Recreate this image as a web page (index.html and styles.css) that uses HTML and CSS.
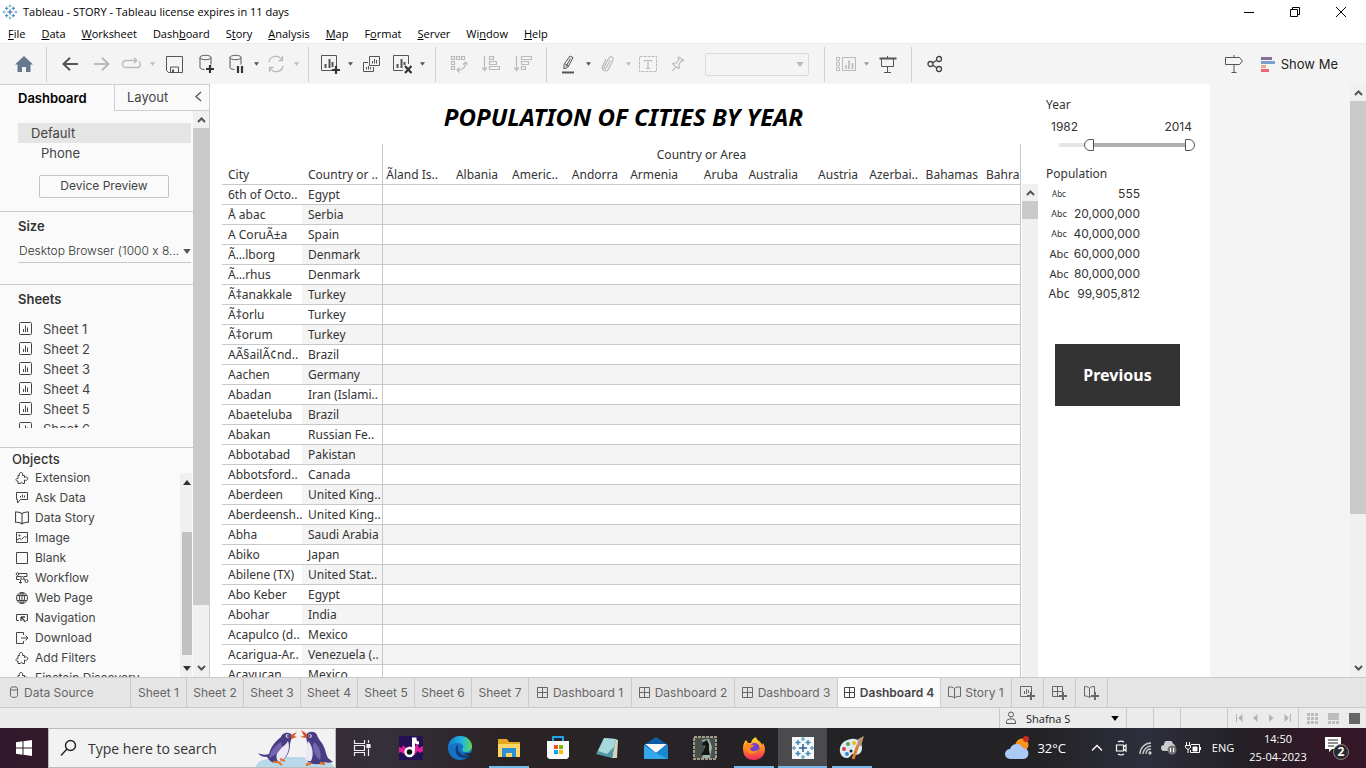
FILE: index.html
```html
<!DOCTYPE html>
<html lang="en">
<head>
<meta charset="utf-8">
<title>Tableau - STORY</title>
<link rel="stylesheet" href="styles.css">
</head>
<body>
<svg class="defs" aria-hidden="true">
  <symbol id="i-sheet" viewBox="0 0 14 14"><rect x=".5" y=".5" width="12" height="12" rx="1" fill="none" stroke="currentColor"/><path d="M4.500 7v3M6.500 3.500V10M8.500 5.500V10" fill="none" stroke="currentColor"/></symbol>
  <symbol id="i-dash" viewBox="0 0 12 12"><path d="M.5 .5h10v10H.5zM5.500 .5v10M.5 5.500h10" fill="none" stroke="currentColor"/></symbol>
  <symbol id="i-story" viewBox="0 0 13 13"><path d="M6.500 2.500C5 1 3 .8.500 1v9.500c2.500-.2 4.500 0 6 1.500 1.500-1.500 3.500-1.700 6-1.500V1C10 .8 8 1 6.500 2.500zM6.500 2.500V12" fill="none" stroke="currentColor"/></symbol>
  <symbol id="i-puzzle" viewBox="0 0 14 14"><path d="M3 4.500h1.500c-.7-2 .3-3 1.500-3s2.200 1 1.500 3H9.500v2c1.500-1 3.300-.5 3.300 1S11 10 9.500 9v3.500H7.500c0-1.500-2-1.500-2 0H3V10C1.700 10.300 1 9.500 1 8.700S1.700 7.300 3 7.500z" fill="none" stroke="currentColor"/></symbol>
  <symbol id="i-caret" viewBox="0 0 6 4"><path d="M0 0h6L3 4z" fill="currentColor"/></symbol>
  <symbol id="i-up" viewBox="0 0 9 6"><path d="M1 5l3.500-3.500L8 5" fill="none" stroke="currentColor" stroke-width="2"/></symbol>
  <symbol id="i-down" viewBox="0 0 9 6"><path d="M1 1l3.500 3.500L8 1" fill="none" stroke="currentColor" stroke-width="2"/></symbol>
  <symbol id="i-tableau" viewBox="0 0 24 24"><g fill="none" stroke="#3f87b5" stroke-width="1.500"><path d="M12 8v8M8 12h8" stroke="#2c5f9e"/><path d="M7 4v5M4.500 6.500h5M17 4v5M14.500 6.500h5M7 15v5M4.500 17.500h5M17 15v5M14.500 17.500h5"/><path d="M12 1v4M10 3h4M12 19v4M10 21h4M3 10v4M1 12h4M21 10v4M19 12h4" stroke="#6ba6c8"/></g></symbol>
  <symbol id="i-db" viewBox="0 0 20 20"><path d="M4 3.500v10c0 1 1.500 1.800 4.500 2M15 3.500v7" fill="none" stroke="currentColor"/><ellipse cx="9.500" cy="3.500" rx="5.500" ry="2.200" fill="none" stroke="currentColor"/></symbol>
</svg>

<header class="titlebar">
  <svg class="app-icon" width="16" height="16"><use href="#i-tableau"/></svg>
  <h1>Tableau - STORY - Tableau license expires in 11 days</h1>
  <div class="window-controls">
    <button aria-label="Minimize"><svg width="12" height="12"><path d="M1 6.500h10" stroke="#000"/></svg></button>
    <button aria-label="Restore"><svg width="12" height="12" fill="none" stroke="#000"><path d="M1.500 3.500h7v7h-7zM3.500 3V1.500h7v7H9"/></svg></button>
    <button aria-label="Close"><svg width="12" height="12" stroke="#000"><path d="M1 1l10 10M11 1L1 11"/></svg></button>
  </div>
</header>

<nav class="menubar">
  <button><u>F</u>ile</button><button><u>D</u>ata</button><button><u>W</u>orksheet</button><button>Dash<u>b</u>oard</button><button>S<u>t</u>ory</button><button><u>A</u>nalysis</button><button><u>M</u>ap</button><button>F<u>o</u>rmat</button><button><u>S</u>erver</button><button>Wi<u>n</u>dow</button><button><u>H</u>elp</button>
</nav>

<div class="toolbar">
  <button class="tool" aria-label="Start page"><svg width="18" height="16"><path d="M9 0L0 8.500h2.500V16H7v-5h4v5h4.500V8.500H18z" fill="#66788e"/></svg></button>
  <span class="sep"></span>
  <button class="tool" aria-label="Undo"><svg width="16" height="14" fill="none" stroke="#555" stroke-width="2"><path d="M16 7H1.500M8 .8L1.500 7 8 13.200"/></svg></button>
  <button class="tool off" aria-label="Redo"><svg width="16" height="14" fill="none" stroke="currentColor" stroke-width="2"><path d="M0 7h14.500M8 .8L14.500 7 8 13.200"/></svg></button>
  <button class="tool narrow off" aria-label="Replay"><svg width="20" height="14" fill="none" stroke="currentColor" stroke-width="1.300"><path d="M8 3.500H4a3.500 3.500 0 000 7h11.500c3 0 3.500-4 1.500-6M8 3.500h6M12 .8l2.700 2.700L12 6.200"/></svg></button>
  <button class="caret off" aria-label="Replay options"><svg width="5" height="4"><use href="#i-caret"/></svg></button>
  <button class="tool" aria-label="Save"><svg width="17" height="17" fill="none" stroke="#555"><path d="M.5 .5h16v16H2.500l-2-2zM4.500 16v-5h8v5"/><path d="M7 13.500v3" stroke-width="2"/></svg></button>
  <button class="tool" aria-label="New data source"><svg width="20" height="20"><use href="#i-db"/><path d="M14 11v8M10 15h8" stroke="#333" stroke-width="2.200"/></svg></button>
  <button class="tool narrow" aria-label="Pause updates"><svg width="20" height="20"><use href="#i-db"/><path d="M12 12v7M16 12v7" stroke="#333" stroke-width="2.200"/></svg></button>
  <button class="caret" aria-label="Pause options"><svg width="5" height="4"><use href="#i-caret"/></svg></button>
  <button class="tool narrow off" aria-label="Refresh"><svg width="18" height="18" fill="none" stroke="currentColor" stroke-width="1.300"><path d="M2 7A7 7 0 0115 5M16 11A7 7 0 013 13M15.500 1v4.500h-4M2.500 17v-4.500h4"/></svg></button>
  <button class="caret off" aria-label="Refresh options"><svg width="5" height="4"><use href="#i-caret"/></svg></button>
  <span class="sep"></span>
  <button class="tool narrow" aria-label="New worksheet"><svg width="20" height="20" fill="none" stroke="#555"><path d="M12 16.500H1.500v-15h15V12"/><path d="M5.500 10v4M9.500 5v9M12.500 8v5" stroke-width="2"/><path d="M16 12v8M12 16h8" stroke="#333" stroke-width="2.200"/></svg></button>
  <button class="caret" aria-label="New worksheet options"><svg width="5" height="4"><use href="#i-caret"/></svg></button>
  <button class="tool" aria-label="Duplicate"><svg width="18" height="18" fill="none" stroke="#555"><path d="M6.500 1.500h10v9h-10zM5 7.500H.5v9h10V12M9.500 6v2.500M11.500 4v4.500M13.500 5v3.500M3.500 12v2.500M5.500 11v3.500M7.500 12v2.500"/></svg></button>
  <button class="tool narrow" aria-label="Clear sheet"><svg width="20" height="20" fill="none" stroke="#555"><path d="M11 16.500H1.500v-15h15V10"/><path d="M5.500 10v4M9.500 5v9M12.500 8v3" stroke-width="2"/><path d="M13 12l6.500 7M19.500 12L13 19" stroke="#333" stroke-width="2.200"/></svg></button>
  <button class="caret" aria-label="Clear options"><svg width="5" height="4"><use href="#i-caret"/></svg></button>
  <span class="sep wide-sep"></span>
  <button class="tool off" aria-label="Swap"><svg width="18" height="18" fill="none" stroke="currentColor" stroke-width="1.200"><path d="M1.500 1.500h3v3h-3zM6.500 1.500h3v3h-3zM11.500 1.500h3v3h-3zM1.500 6.500h3v3h-3zM1.500 11.500h3v3h-3zM15.500 7.500c0 5-2 7.500-8 7.500M13 9.500l2.500-2.500L18 9.500M9.500 12.500L7 15l2.500 2.500"/></svg></button>
  <button class="tool off" aria-label="Sort ascending"><svg width="18" height="18" fill="none" stroke="currentColor" stroke-width="1.200"><path d="M2.500 1v14M0 12.500l2.500 3 2.500-3M7.500 1.500h4v3h-4zM7.500 6.500h7v3h-7zM7.500 11.500h10v3h-10z"/></svg></button>
  <button class="tool off" aria-label="Sort descending"><svg width="18" height="18" fill="none" stroke="currentColor" stroke-width="1.200"><path d="M2.500 1v14M0 12.500l2.500 3 2.500-3M7.500 1.500h10v3h-10zM7.500 6.500h7v3h-7zM7.500 11.500h4v3h-4z"/></svg></button>
  <span class="sep wide-sep"></span>
  <button class="tool narrow" aria-label="Highlight"><svg width="14" height="20" fill="none" stroke="#555"><path d="M9 2l3 1.500-5 9.500-4 2v-4.500zM4 10l3.500 2M5 12.500l4.500-8"/><path d="M1 18.500h12" stroke-width="2"/></svg></button>
  <button class="caret" aria-label="Highlight options"><svg width="5" height="4"><use href="#i-caret"/></svg></button>
  <button class="tool narrow off" aria-label="Group members"><svg width="14" height="18" fill="none" stroke="currentColor" stroke-width="1.200"><path d="M9.500 5L5 13c-.8 1.500-2.500.5-2-1L8 3c1.500-2.500 5-1 4 2L7.500 14c-2 3.500-7.500 1.500-6-3L5 4"/></svg></button>
  <button class="caret off" aria-label="Group options"><svg width="5" height="4"><use href="#i-caret"/></svg></button>
  <button class="tool narrow off" aria-label="Show mark labels"><svg width="18" height="16" fill="none" stroke="currentColor"><path d="M.5 .5h17v15H.5z" stroke-dasharray="3 1"/><path d="M5.500 6V4.500h7V6M9 4.500v8M7 12.500h4" stroke-width="1.200"/></svg></button>
  <button class="tool off" aria-label="Fix axes"><svg width="14" height="16" fill="none" stroke="currentColor" stroke-width="1.200"><path d="M7.500 1l5 3-1 1-1.200-.2L8 8.500l.3 3-1 1L1.500 8l1-.8 3-.2L8 3.500 7 2zM5 10.500L1.500 15"/></svg></button>
  <div class="fit"><select aria-label="Fit" disabled><option></option></select><svg width="8" height="5"><use href="#i-caret" /></svg></div>
  <span class="sep wide-sep"></span>
  <button class="tool narrow off" aria-label="Show cards"><svg width="20" height="14" fill="none" stroke="currentColor"><path d="M.5 .5h3v3h-3zM.5 5.500h3v3h-3zM.5 10.500h3v3h-3zM6.500 .5h13v13h-13z"/><path d="M10 8v4M13 3.500V12M16.500 6v6" stroke-width="1.700"/></svg></button>
  <button class="caret off dark" aria-label="Cards options"><svg width="5" height="4"><use href="#i-caret"/></svg></button>
  <button class="tool" aria-label="Presentation mode"><svg width="18" height="17" fill="none" stroke="#555"><path d="M8.500 0v2M2.500 2.500v8h12v-8M8.500 11v5M5 16.500h7"/><path d="M.5 2.500h17" stroke-width="2"/></svg></button>
  <span class="sep wide-sep"></span>
  <button class="tool" aria-label="Share"><svg width="16" height="18" fill="none" stroke="#444" stroke-width="1.300"><circle cx="3.500" cy="9" r="2.500"/><circle cx="12" cy="4" r="2.500"/><circle cx="12" cy="14" r="2.500"/><path d="M5.800 7.800l4-2.500M5.800 10.200l4 2.500"/></svg></button>
  <div class="toolbar-right">
    <button class="tool" aria-label="Guide"><svg width="18" height="18" fill="none" stroke="#555"><path d="M.5 2.500h14l3 3.500-3 3.500H.5zM9 0v2.500M9 9.500V17M6.500 17.500h5"/></svg></button>
    <button class="show-me"><svg width="15" height="15"><path d="M0 0h11v3H0z" fill="#8470a0"/><path d="M0 4h14v3H0z" fill="#7ba0cc"/><path d="M0 8h5v3H0z" fill="#f5a582"/><path d="M0 12h8v3H0z" fill="#f2647c"/></svg>Show Me</button>
  </div>
</div>

<div class="workspace">
  <aside class="sidebar">
    <div class="side-tabs">
      <button class="side-tab current">Dashboard</button>
      <button class="side-tab layout">Layout</button>
      <button class="collapse" aria-label="Collapse"><svg width="7" height="11" fill="none" stroke="#555" stroke-width="1.300"><path d="M6 1L1 5.500 6 10"/></svg></button>
    </div>
    <div class="side-body">
      <div class="side-content">
        <section class="devices">
          <button class="device selected">Default</button>
          <button class="device">Phone</button>
          <button class="preview">Device Preview</button>
        </section>
        <section class="size">
          <h2>Size</h2>
          <div class="size-box"><select aria-label="Size"><option>Desktop Browser (1000 x 8...</option></select><svg width="8" height="5"><use href="#i-caret"/></svg></div>
        </section>
        <section class="sheets">
          <h2>Sheets</h2>
          <ul>
            <li><svg width="14" height="14"><use href="#i-sheet"/></svg>Sheet 1</li>
            <li><svg width="14" height="14"><use href="#i-sheet"/></svg>Sheet 2</li>
            <li><svg width="14" height="14"><use href="#i-sheet"/></svg>Sheet 3</li>
            <li><svg width="14" height="14"><use href="#i-sheet"/></svg>Sheet 4</li>
            <li><svg width="14" height="14"><use href="#i-sheet"/></svg>Sheet 5</li>
            <li><svg width="14" height="14"><use href="#i-sheet"/></svg>Sheet 6</li>
          </ul>
        </section>
        <section class="objects">
          <h2>Objects</h2>
          <div class="objects-row">
            <ul>
              <li><svg width="14" height="14"><use href="#i-puzzle"/></svg>Extension</li>
              <li><svg width="14" height="14" fill="none" stroke="currentColor"><path d="M1.500 1.500h11v7h-7l-3 3.500V8.500h-1zM5.500 5v1.500M7.500 3.500v3M9.500 4.500v2"/></svg>Ask Data</li>
              <li><svg width="14" height="14"><use href="#i-story"/></svg>Data Story</li>
              <li><svg width="14" height="14" fill="none" stroke="currentColor"><path d="M1.500 1.500h11v10h-11zM1.500 9l3-1.500 2 1 3-3 1.500 1 1.500-1.500"/><circle cx="4.500" cy="4.500" r=".7"/></svg>Image</li>
              <li><svg width="14" height="14" fill="none" stroke="currentColor"><path d="M1.500 1.500h11v11h-11z"/></svg>Blank</li>
              <li><svg width="14" height="14" fill="none" stroke="currentColor"><circle cx="2.500" cy="3" r="1.300"/><path d="M4 2.500h8v3H9M6 5.500H1.500v3h3M9 8.500h1M4 11.500h3M5.500 8.500v4"/><circle cx="7.500" cy="7" r="1.500"/><circle cx="11.500" cy="10" r="1.500"/></svg>Workflow</li>
              <li><svg width="14" height="14" fill="none" stroke="currentColor"><circle cx="7" cy="7" r="5.500"/><ellipse cx="7" cy="7" rx="2.500" ry="5.500"/><path d="M7 1.500v11M2 4.500h10M2 9.500h10"/></svg>Web Page</li>
              <li><svg width="14" height="14" fill="none" stroke="currentColor"><path d="M4 9.500H1.500v-6h11v6H11"/><path d="M6 6l4.500 5M6 6v4M6 6h4" stroke-width="1.300"/></svg>Navigation</li>
              <li><svg width="14" height="14" fill="none" stroke="currentColor"><path d="M8.500 4V1.500h-7v11h7V10M6 7h7M10.500 4.500L13 7l-2.500 2.500"/></svg>Download</li>
              <li><svg width="14" height="14"><use href="#i-puzzle"/></svg>Add Filters</li>
              <li><svg width="14" height="14"><use href="#i-puzzle"/></svg>Einstein Discovery</li>
            </ul>
            <div class="mini-scroll"><svg width="8" height="5"><path d="M0 5h8L4 0z" fill="#333"/></svg><span></span><svg width="8" height="5"><path d="M0 0h8L4 5z" fill="#333"/></svg></div>
          </div>
        </section>
      </div>
      <div class="scrollbar side-scroll"><svg width="9" height="6"><use href="#i-up"/></svg><span></span><svg width="9" height="6"><use href="#i-down"/></svg></div>
    </div>
  </aside>

  <main class="canvas">
    <div class="sheet-zone">
      <h2 class="title">POPULATION OF CITIES BY YEAR</h2>
      <div class="viz">
        <table>
          <colgroup><col class="c"><col class="c"><col class="m"><col class="m"><col class="m"><col class="m"><col class="m"><col class="m"><col class="m"><col class="m"><col class="m"><col class="m"><col></colgroup>
          <thead>
            <tr><td colspan="2"></td><th class="group" colspan="11">Country or Area</th></tr>
            <tr class="labels"><th class="left">City</th><th class="left">Country or ..</th><th class="first">Ãland Is..</th><th>Albania</th><th>Americ..</th><th>Andorra</th><th>Armenia</th><th>Aruba</th><th>Australia</th><th>Austria</th><th>Azerbai..</th><th>Bahamas</th><th class="cut">Bahrain</th></tr>
          </thead>
          <tbody>
            <tr><td>6th of Octo..</td><td>Egypt</td><td colspan="11"></td></tr>
            <tr><td>Å abac</td><td>Serbia</td><td colspan="11"></td></tr>
            <tr><td>A CoruÃ±a</td><td>Spain</td><td colspan="11"></td></tr>
            <tr><td>Ã…lborg</td><td>Denmark</td><td colspan="11"></td></tr>
            <tr><td>Ã…rhus</td><td>Denmark</td><td colspan="11"></td></tr>
            <tr><td>Ã‡anakkale</td><td>Turkey</td><td colspan="11"></td></tr>
            <tr><td>Ã‡orlu</td><td>Turkey</td><td colspan="11"></td></tr>
            <tr><td>Ã‡orum</td><td>Turkey</td><td colspan="11"></td></tr>
            <tr><td>AÃ§ailÃ¢nd..</td><td>Brazil</td><td colspan="11"></td></tr>
            <tr><td>Aachen</td><td>Germany</td><td colspan="11"></td></tr>
            <tr><td>Abadan</td><td>Iran (Islami..</td><td colspan="11"></td></tr>
            <tr><td>Abaeteluba</td><td>Brazil</td><td colspan="11"></td></tr>
            <tr><td>Abakan</td><td>Russian Fe..</td><td colspan="11"></td></tr>
            <tr><td>Abbotabad</td><td>Pakistan</td><td colspan="11"></td></tr>
            <tr><td>Abbotsford..</td><td>Canada</td><td colspan="11"></td></tr>
            <tr><td>Aberdeen</td><td>United King..</td><td colspan="11"></td></tr>
            <tr><td>Aberdeensh..</td><td>United King..</td><td colspan="11"></td></tr>
            <tr><td>Abha</td><td>Saudi Arabia</td><td colspan="11"></td></tr>
            <tr><td>Abiko</td><td>Japan</td><td colspan="11"></td></tr>
            <tr><td>Abilene (TX)</td><td>United Stat..</td><td colspan="11"></td></tr>
            <tr><td>Abo Keber</td><td>Egypt</td><td colspan="11"></td></tr>
            <tr><td>Abohar</td><td>India</td><td colspan="11"></td></tr>
            <tr><td>Acapulco (d..</td><td>Mexico</td><td colspan="11"></td></tr>
            <tr><td>Acarigua-Ar..</td><td>Venezuela (..</td><td colspan="11"></td></tr>
            <tr><td>Acayucan</td><td>Mexico</td><td colspan="11"></td></tr>
          </tbody>
        </table>
        <div class="scrollbar viz-scroll"><svg width="9" height="6"><use href="#i-up"/></svg><span></span></div>
      </div>
    </div>
    <div class="legend">
      <h3>Year</h3>
      <div class="years"><span>1982</span><span>2014</span></div>
      <div class="slider">
        <input class="low" type="range" min="1974" max="2014" value="1982" aria-label="First year">
        <input class="high" type="range" min="1974" max="2014" value="2014" aria-label="Last year">
      </div>
      <h3>Population</h3>
      <ul class="population">
        <li><span class="s1">Abc</span><b>555</b></li>
        <li><span class="s2">Abc</span><b>20,000,000</b></li>
        <li><span class="s2">Abc</span><b>40,000,000</b></li>
        <li><span class="s3">Abc</span><b>60,000,000</b></li>
        <li><span class="s3">Abc</span><b>80,000,000</b></li>
        <li><span class="s4">Abc</span><b>99,905,812</b></li>
      </ul>
      <button class="previous">Previous</button>
    </div>
  </main>
  <div class="scrollbar page-scroll"><svg width="9" height="6"><use href="#i-up"/></svg><span></span><svg width="9" height="6"><use href="#i-down"/></svg></div>
</div>

<nav class="tabs">
  <button class="source"><svg width="11" height="13" fill="none" stroke="currentColor"><path d="M1.500 2.500v7c0 2.500 7 2.500 7 0v-7"/><ellipse cx="5" cy="2.500" rx="3.500" ry="1.700"/></svg>Data Source</button>
  <button class="sheet">Sheet 1</button><button class="sheet">Sheet 2</button><button class="sheet">Sheet 3</button><button class="sheet">Sheet 4</button><button class="sheet">Sheet 5</button><button class="sheet">Sheet 6</button><button class="sheet">Sheet 7</button>
  <button class="dash"><svg width="12" height="12"><use href="#i-dash"/></svg>Dashboard 1</button>
  <button class="dash"><svg width="12" height="12"><use href="#i-dash"/></svg>Dashboard 2</button>
  <button class="dash"><svg width="12" height="12"><use href="#i-dash"/></svg>Dashboard 3</button>
  <button class="dash current"><svg width="12" height="12"><use href="#i-dash"/></svg>Dashboard 4</button>
  <button class="story"><svg width="13" height="13"><use href="#i-story"/></svg>Story 1</button>
  <button class="add" aria-label="New worksheet"><svg width="17" height="16" fill="none" stroke="currentColor"><path d="M9 11.500H1.500v-10h11V7M5.500 6v3M7.500 4v5M9.500 5v3"/><path d="M12 7v8M8 11h8" stroke-width="2"/></svg></button>
  <button class="add" aria-label="New dashboard"><svg width="17" height="16" fill="none" stroke="currentColor"><path d="M9 11.500H1.500v-10h10V7M6.500 1.500v10M1.500 6.500h10"/><path d="M12 7v8M8 11h8" stroke-width="2"/></svg></button>
  <button class="add" aria-label="New story"><svg width="17" height="16" fill="none" stroke="currentColor"><path d="M8 11.500l-1.500 1c-1.500-1.200-3-1.500-5-1.500V1.500c2 0 3.500.3 5 1.500 1.500-1.200 3-1.500 5-1.500V7M6.500 3v9"/><path d="M12 7v8M8 11h8" stroke-width="2"/></svg></button>
</nav>

<footer class="status">
  <button class="user"><svg width="12" height="14" fill="none" stroke="#555"><circle cx="6" cy="3.500" r="2.500"/><path d="M1.500 12.500v-2c0-3.500 9-3.500 9 0v2z"/></svg><span>Shafna S</span><svg class="user-caret" width="8" height="5"><use href="#i-caret"/></svg></button>
  <span class="cell"></span><span class="cell"></span><span class="cell wide"></span>
  <div class="pager">
    <button aria-label="First"><svg width="7" height="8"><path d="M0 0h1v8H0zM6.500 0v8L2 4z" fill="#b4b4b4"/></svg></button>
    <button aria-label="Back"><svg width="7" height="8"><path d="M5.500 0v8L1 4z" fill="#b4b4b4"/></svg></button>
    <button aria-label="Forward"><svg width="7" height="8"><path d="M1 0v8l4.500-4z" fill="#b4b4b4"/></svg></button>
    <button aria-label="Last"><svg width="7" height="8"><path d="M6 0h1v8H6zM.5 0v8L5 4z" fill="#b4b4b4"/></svg></button>
  </div>
  <div class="views">
    <button aria-label="Sheet sorter"><svg width="11" height="11" fill="#bdbdbd"><path d="M0 0h3v3H0zM4 0h3v3H4zM8 0h3v3H8zM0 4h3v3H0zM4 4h3v3H4zM8 4h3v3H8zM0 8h3v3H0zM4 8h3v3H4zM8 8h3v3H8z"/></svg></button>
    <button aria-label="Filmstrip"><svg width="11" height="11" fill="#bdbdbd"><path d="M0 0h11v7H0zM0 8h3v3H0zM4 8h3v3H4zM8 8h3v3H8z"/></svg></button>
    <button aria-label="Tabs"><svg width="11" height="11"><path d="M0 0h11v11H0z" fill="#666"/></svg></button>
  </div>
</footer>

<div class="taskbar">
  <button class="start" aria-label="Start"><svg width="16" height="16" fill="#fff"><path d="M0 2.300L6.500 1.300v6.200H0zM7.500 1.200L16 0v7.500H7.500zM0 8.500h6.500v6.200L0 13.700zM7.500 8.500H16V16l-8.500-1.200z"/></svg></button>
  <label class="search">
    <svg width="18" height="18" fill="none" stroke="#222" stroke-width="1.400"><circle cx="10.500" cy="6.500" r="5"/><path d="M7 10L1 16.500"/></svg>
    <input type="text" placeholder="Type here to search" aria-label="Search">
    <svg class="penguins" width="80" height="38" viewBox="0 0 80 38">
      <path d="M1 38c1-7 12-10 36-10s40 3 42 10z" fill="#b9d8ea"/>
      <path d="M3 24c4 2 8 2 11 1 2-8 7-13 12-17 1-5 10-6 11-1 0 3-2 5-2 9 0 8-5 17-15 18-3 0-6-3-8-6-4 0-7-1-9-4z" fill="#4a3c82"/>
      <path d="M33 12c3 7-1 18-9 21-4-3-3-9 1-13 3-3 6-4 8-8z" fill="#ebe8f3"/>
      <path d="M26 13c-5 3-11 8-12 16 6-2 12-8 13-12z" fill="#7264ad"/>
      <circle cx="32.500" cy="7" r="1.800" fill="#f3eef8"/><circle cx="33" cy="7" r="1" fill="#221a3c"/>
      <path d="M36 6l6-3-3 4 3 1-6 2z" fill="#df5328"/>
      <path d="M18 33l5 0 4 3M25 30l5 2" fill="none" stroke="#e4722b" stroke-width="2"/>
      <path d="M51 7c1-5 9-6 11-1 1 4 5 7 7 12 2 4 2 8 4 11l5 4c-3 1-6 1-8 0-4 3-12 3-17 0-3-6 2-14-1-20z" fill="#4a3c82"/>
      <path d="M53 12c5 5 6 14 3 20-6 1-7-4-5-9 1-4 1-7 2-11z" fill="#ebe8f3"/>
      <path d="M59 13c5 4 8 10 6 18-5-4-9-11-6-18z" fill="#7264ad"/>
      <circle cx="55" cy="7" r="1.800" fill="#f3eef8"/><circle cx="54.500" cy="7" r="1" fill="#221a3c"/>
      <path d="M51 9l-6-1 4-1-3-6 6 4z" fill="#df5328"/>
      <path d="M56 34l-5 2M65 34l5 1" fill="none" stroke="#e4722b" stroke-width="2.500"/>
    </svg>
  </label>
  <div class="apps">
    <button class="app" aria-label="Task View"><svg width="18" height="16" fill="none" stroke="#eee" stroke-width="1.200"><path d="M1.500 0v3.500h10V0M1.500 5.500h10v5h-10zM1.500 16v-3.500h10V16M15.500 0v3M15.500 8.500V16"/><path d="M14 4.500h3v3h-3z" fill="#eee"/></svg></button>
    <button class="app" aria-label="Music"><svg width="24" height="24"><path d="M0 0h24v24H0z" fill="#241052"/><path d="M0 11l3 1 1-3 3 3 4-2 3 2 4-4 2 4 4-2v5l-3 2-2-2-4 4-6-3-4 2-3-2-2 1z" fill="#e21c9b"/><path d="M13 3h3c0 3 2 4 4 4M14.500 3v12" fill="none" stroke="#fff" stroke-width="3"/><circle cx="10.500" cy="16" r="4" fill="#111" stroke="#fff" stroke-width="2.500"/></svg></button>
    <button class="app" aria-label="Edge"><svg width="24" height="24"><defs><linearGradient id="edge"><stop stop-color="#1478d4"/><stop offset=".6" stop-color="#24b5dc"/><stop offset="1" stop-color="#65d64b"/></linearGradient></defs><circle cx="12" cy="12" r="12" fill="#1673c4"/><path d="M0 11C1 4 6 0 12 0c7 0 12 5 12 10 0 4-3 6-6 6-4 0-5-2-3-4 1-3-2-5-5-5-4 0-8 1-10 4z" fill="url(#edge)"/><path d="M10 8c-5 5-2 14 6 14 3 0 5-1 6-3-5 2-11-1-12-6z" fill="#0b3f7c"/><path d="M13 13c0 5 6 6 11 3v3c-4 2-11-1-11-6z" fill="#24272d"/></svg></button>
    <button class="app running" aria-label="File Explorer"><svg width="24" height="20"><path d="M1 1h9l2 3h11v15H1z" fill="#e5a91f"/><path d="M1 6h22v13H1z" fill="#ffd766"/><path d="M5 10h14v9h-4v-4H9v4H5z" fill="#2c8fd8"/></svg></button>
    <button class="app" aria-label="Store"><svg width="24" height="24"><path d="M7 5V1h10v4" fill="none" stroke="#1ca4e8" stroke-width="2"/><path d="M1 5h22v16l-2 2H3l-2-2z" fill="#fafafa"/><path d="M8 9h4v4H8z" fill="#f25022"/><path d="M13 9h4v4h-4z" fill="#7fba00"/><path d="M8 14h4v4H8z" fill="#00a4ef"/><path d="M13 14h4v4h-4z" fill="#ffb900"/></svg></button>
    <button class="app" aria-label="Notepad"><svg width="24" height="24"><path d="M20 3l3 1-1 18-5 0z" fill="#d8d2bd"/><path d="M9 2l12 1-4 19-16-4z" fill="#4f98a8"/><path d="M9 2l12 1-2 8-7 7-9-3z" fill="#a8d7dc"/></svg></button>
    <button class="app" aria-label="Mail"><svg width="24" height="24"><path d="M0 9l12-8 12 8v14H0z" fill="#0d5aa8"/><path d="M1 8h22L12 17z" fill="#f5f7fa"/><path d="M0 9l12 8L24 9v14H0z" fill="#32a9ea"/><path d="M12 17l12-8v14z" fill="#1886d2"/></svg></button>
    <button class="app" aria-label="Chess"><svg width="24" height="24"><path d="M1 1h22v22H1z" fill="#47504b" stroke="#a09b87" stroke-width="2" stroke-dasharray="3 1"/><path d="M9 4l7-1 3 8-2 11H9l3-9z" fill="#a2b5ac"/><path d="M10 6l4-2 2 4v6l1 5H8l3-5 1-4-3-1z" fill="#131716"/></svg></button>
    <button class="app running" aria-label="Firefox"><svg width="24" height="24"><defs><linearGradient id="fox" x2="0" y2="1"><stop stop-color="#ffe12e"/><stop offset=".5" stop-color="#ff8429"/><stop offset="1" stop-color="#f0265f"/></linearGradient></defs><path d="M1 12c0-3 1-6 3-8l2 3 3 0c1-4 3-5 5-6 0 3 5 4 6 8l1-2c5 8 0 17-9 17S1 18 1 12z" fill="url(#fox)"/><circle cx="12.500" cy="12" r="5" fill="#6f42c9"/><path d="M3 8c3-2 5 1 9 1-1 3-4 2-4 4 2 4 7 2 9 0-1 5-10 7-13 1z" fill="#ff8a1e"/></svg></button>
    <button class="app active" aria-label="Tableau"><svg width="24" height="24"><path d="M1 1h22v22H1z" fill="#f4f6f8"/><use href="#i-tableau"/></svg></button>
    <button class="app running" aria-label="Paint"><svg width="26" height="24"><path d="M12 3c7-1 11 3 11 9s-5 8-8 6c-3-1-3 4-7 4-5 0-8-5-7-10S6 4 12 3z" fill="#dcebf3"/><circle cx="9" cy="8" r="2" fill="#5aa33e"/><circle cx="5" cy="13" r="2" fill="#d83e36"/><circle cx="15" cy="7" r="2" fill="#f2b71e"/><circle cx="8" cy="18" r="2" fill="#3488cf"/><circle cx="12" cy="15" r="1.500" fill="#222"/><path d="M14 23l5-14" stroke="#db812a" stroke-width="3"/><path d="M18 10l1-7 6-3-3 10z" fill="#ba926b"/></svg></button>
  </div>
  <div class="tray">
    <button class="weather"><svg width="26" height="24"><circle cx="18" cy="9" r="6.500" fill="#f7931d"/><circle cx="22" cy="3" r="3" fill="#c82c20"/><path d="M6 23a5 5 0 010-10 7 7 0 0113-1 5.500 5.500 0 010 11z" fill="#a8caf4"/></svg>32°C</button>
    <button aria-label="Hidden icons"><svg width="12" height="8" fill="none" stroke="#fff" stroke-width="1.300"><path d="M1 6.500l5-5 5 5"/></svg></button>
    <button aria-label="Meet Now"><svg width="12" height="16" fill="none" stroke="#fff" stroke-width="1.200"><path d="M1.500 5h7v6h-7zM8.500 7l2.500-2v6L8.500 9M3 2c1.500-1.300 4.500-1.300 6 0M3 14c1.500 1.300 4.500 1.300 6 0"/></svg></button>
    <button aria-label="Network"><svg width="13" height="13" fill="none" stroke="#ccc" stroke-width="1.300"><path d="M1 12C1 6 6 1 12 1M4 12c0-4 4-8 8-8M7 12c0-3 2-5 5-5"/><circle cx="11" cy="11" r="1" fill="#fff"/></svg></button>
    <button aria-label="OneDrive"><svg width="16" height="14"><path d="M3 10a3 3 0 010-6 4.500 4.500 0 019-1c3 0 3 6 0 7z" fill="#ccc"/><circle cx="11" cy="9" r="4.500" fill="#777"/><path d="M9.500 7v4M12.500 7v4" stroke="#fff"/></svg></button>
    <button aria-label="Battery"><svg width="16" height="12" fill="none" stroke="#fff"><path d="M6 2.500h8.500v8h-9V8M15.500 5v3M1.500 0v3M4.500 0v3M.5 3.500h5v2l-2.500 2-2.500-2zM3 7v4"/><path d="M8 5h4v4H8z" fill="#fff"/></svg></button>
    <button class="lang">ENG</button>
    <button class="clock"><span>14:50</span><span>25-04-2023</span></button>
    <button class="notes" aria-label="Notifications"><svg width="26" height="26"><path d="M1 2h16v12H8l-3 3v-3H1z" fill="#fff"/><path d="M4 5h10M4 8h10M4 11h6" stroke="#222"/><circle cx="17" cy="17" r="7.500" fill="#2a2a2c" stroke="#888"/><text x="17" y="21" text-anchor="middle" class="badge">2</text></svg></button>
  </div>
</div>
</body>
</html>
```
FILE: styles.css
```css
* { box-sizing: border-box; }
html, body { height: 100%; }
body {
  margin: 0; display: flex; flex-direction: column; overflow: hidden;
  font: 13px/20px Inter, "Open Sans", sans-serif; font-feature-settings: "calt" 0; color: #444; background: #f4f4f4;
}
button { font: inherit; font-feature-settings: inherit; color: inherit; background: none; border: 0; padding: 0; margin: 0; text-align: left; white-space: nowrap; }
h1, h2, h3, ul { margin: 0; padding: 0; font: inherit; }
ul { list-style: none; }
svg { display: block; flex: none; }
.defs { position: absolute; width: 0; height: 0; }

.titlebar { flex: none; height: 24px; display: flex; align-items: center; background: #fff; color: #000; font-family: "Open Sans", sans-serif; font-size: 11px; padding-left: 2px; }
.titlebar h1 { padding-left: 5px; }
.window-controls { margin-left: auto; display: flex; padding-right: 2px; }
.window-controls button { width: 46px; height: 20px; display: flex; align-items: center; justify-content: center; }
.menubar { flex: none; height: 19px; display: flex; gap: 16px; padding-left: 8px; background: #fff; color: #000; font-family: "Open Sans", sans-serif; font-size: 11px; }

.toolbar { flex: none; height: 41px; display: flex; align-items: center; padding-left: 8px; background: #f4f4f4; border-top: 1px solid #ececec; color: #555; }
.tool, .caret { height: 32px; display: flex; align-items: center; justify-content: center; flex: none; width: 32px; }
.narrow { width: 28px; }
.caret { width: 12px; }
.off { color: #bababa; }
.dark { color: #999; }
.sep { width: 1px; height: 35px; margin: 0 7px 0 6px; background: #d0d0d0; flex: none; }
.wide-sep { margin: 0 7px; }
.fit { position: relative; width: 104px; margin: 0 8px 0 11px; color: #bababa; }
.fit select { display: block; width: 100%; height: 23px; border: 1px solid #cfcfcf; border-radius: 2px; background: none; appearance: none; }
.fit svg { position: absolute; right: 5px; top: 9px; }
.toolbar-right { margin-left: auto; display: flex; align-items: center; padding-right: 28px; }
.show-me { display: flex; align-items: center; gap: 5px; padding-left: 11px; font-size: 13px; color: #222; }

.workspace { flex: 1; min-height: 0; display: flex; }
.sidebar { flex: none; width: 210px; display: flex; flex-direction: column; background: #fafafa; border-right: 1px solid #cfcfcf; }
.side-tabs { flex: none; display: flex; height: 27px; border-top: 1px solid #d0d0d0; }
.side-tab { padding-bottom: 1px; }
.side-tab.current { width: 114px; padding-left: 18px; font-weight: 600; color: #000; }
.layout, .collapse { border-bottom: 1px solid #cfcfcf; }
.layout { flex: 1; border-left: 1px solid #cfcfcf; padding-left: 12px; }
.collapse { width: 18px; padding: 0 0 2px 4px; }
.side-body { flex: 1; min-height: 0; display: flex; }
.side-content { flex: 1; min-width: 0; display: flex; flex-direction: column; }
.side-content section { flex: none; border-bottom: 1px solid #c8c8c8; }
.side-content h2 { font-weight: 600; color: #333; }
.devices { height: 101px; padding: 12px 2px 0 18px; }
.device { display: block; width: 100%; height: 20px; padding-left: 23px; }
.device.selected { background: #e5e5e5; padding-left: 13px; }
.preview { width: 130px; height: 23px; margin: 12px 0 0 21px; padding-bottom: 1px; border: 1px solid #c4c4c4; border-radius: 2px; text-align: center; font-size: 12px; }
.size { height: 73px; padding: 4px 2px 0 18px; }
.size-box { position: relative; margin-top: 5px; }
.size-box select { display: block; width: 100%; height: 22px; padding: 0 0 1px 1px; border: 0; border-bottom: 1px solid #c8c8c8; background: none; appearance: none; font: inherit; font-feature-settings: inherit; font-size: 12px; font-weight: 300; color: #333; }
.size-box svg { position: absolute; right: 0; top: 8px; color: #555; }
.sheets { height: 163px; padding: 4px 0 0 18px; }
.sheets ul { margin-top: 10px; height: 109px; overflow: hidden; }
li { display: flex; align-items: center; height: 20px; }
.sheets li { gap: 10px; padding-left: 1px; }
.side-content .objects { flex: 1; min-height: 0; border: 0; padding-left: 12px; display: flex; flex-direction: column; }
.objects h2 { padding-top: 2px; line-height: 18px; font-weight: 500; }
.objects-row { flex: 1; min-height: 0; display: flex; overflow: hidden; }
.objects ul { flex: 1; font-size: 12px; }
.objects li { gap: 6px; padding-left: 3px; }
.mini-scroll { width: 12px; margin: 5px 1px 0 0; padding: 7px 0 6px 2px; background: #f0f0f0; display: flex; flex-direction: column; }
.mini-scroll span { height: 123px; margin: auto 0 11px; background: #c1c1c1; }
.mini-scroll svg { align-self: center; }

.scrollbar { width: 16px; flex: none; display: flex; flex-direction: column; align-items: center; background: #f0f0f0; color: #555; padding: 6px 0; }
.scrollbar span { width: 16px; background: #cacaca; margin-top: 5px; }
.side-scroll span { flex: 1; max-height: 477px; }
.side-scroll svg:last-child, .page-scroll svg:last-child { margin-top: auto; }

.canvas { flex: 0 1 1000px; min-width: 0; display: flex; background: #fff; color: #333; }
.sheet-zone { flex: 1; min-width: 0; padding-left: 12px; display: flex; flex-direction: column; }
.title { flex: none; height: 60px; padding: 3px 13px 0 0; text-align: center; font: italic 700 24px/60px "Noto Sans", sans-serif; color: #000; }
.viz { flex: 1; min-height: 0; display: flex; align-items: flex-start; overflow: hidden; }
table { flex: 1; min-width: 0; table-layout: fixed; width: 100%; border-collapse: separate; border-spacing: 0; font: 12px/19px "Noto Sans", sans-serif; border-right: 1px solid #c8c8c8; }
.c { width: 80px; }
.m { width: 60px; }
th, td { height: 20px; padding: 0 0 0 6px; text-align: left; font-weight: 400; white-space: nowrap; }
thead th.group { text-align: center; padding: 0; border-left: 1px solid #c8c8c8; }
.labels th { height: 21px; text-align: right; padding: 0 4px 0 0; border-bottom: 1px solid #c8c8c8; }
.labels th.left { text-align: left; padding: 0 0 0 6px; }
.labels th.first { border-left: 1px solid #c8c8c8; }
.labels th.cut { text-align: left; padding: 0 0 0 4px; overflow: hidden; }
tbody td { border-bottom: 1px solid #c8c8c8; }
tbody tr:nth-child(even) td + td { background: #f4f4f4; }
tbody td:nth-child(3) { border-left: 1px solid #c8c8c8; }
.viz-scroll { align-self: stretch; margin: 40px 0 0 1px; }
.viz-scroll span { height: 18px; }

.legend { width: 172px; padding: 11px 16px 0 8px; font-size: 12px; }
.legend h3 { font-family: "Noto Sans", sans-serif; }
.years { display: flex; justify-content: space-between; padding: 2px 2px 0 5px; }
.slider { position: relative; height: 12px; margin: 2px 0 12px 13px; width: 136px; }
.slider::before { content: ""; position: absolute; inset: 4px 6px 4px 0; background: linear-gradient(90deg, #e6e6e6 25px, #b0b0b0 25px); }
.slider input { position: absolute; inset: 0; width: 100%; height: 12px; margin: 0; appearance: none; background: none; pointer-events: none; }
.slider input::-webkit-slider-thumb { appearance: none; width: 10px; height: 12px; border: 1px solid #555; background: #fff; pointer-events: auto; }
.slider .low::-webkit-slider-thumb { border-radius: 6px 0 0 6px; }
.slider .high::-webkit-slider-thumb { border-radius: 0 6px 6px 0; }
.legend .slider + h3 { margin-top: 13px; }
.population b { margin-left: auto; font-weight: 400; }
.population li { width: 94px; }
.population span { width: 26px; text-align: center; font-family: "Noto Sans", sans-serif; }
.s1 { font-size: 8px; } .s2 { font-size: 9px; } .s3 { font-size: 11px; } .s4 { font-size: 12px; }
.previous { width: 125px; height: 62px; margin: 40px 0 0 9px; background: #333; color: #fff; text-align: center; font: 700 16px "Noto Sans", sans-serif; }
.page-scroll { margin-left: auto; }
.page-scroll span { flex: 1; max-height: 413px; }

.tabs { flex: none; display: flex; height: 31px; background: #e5e5e5; border-top: 1px solid #cacaca; border-bottom: 1px solid #cacaca; color: #666; font-size: 12px; }
.tabs button { display: flex; align-items: center; justify-content: center; gap: 4px; border-right: 1px solid #cacaca; }
.tabs .source { width: 131px; justify-content: flex-start; padding-left: 9px; }
.tabs .sheet { width: 57px; }
.tabs .source + .sheet { width: 56px; }
.tabs .dash { width: 103px; }
.tabs .story { width: 71px; }
.tabs .add { width: 32px; }
.tabs .current { background: #fafafa; color: #444; font-weight: 600; }

.status { flex: none; height: 20px; display: flex; justify-content: flex-end; background: #ebebeb; }
.status > * { border-left: 1px solid #cacaca; }
.user { width: 127px; display: flex; align-items: center; padding: 0 7px 0 5px; gap: 9px; font: 11px "Open Sans", sans-serif; color: #222; }
.user-caret { margin-left: auto; color: #000; }
.cell { width: 27px; }
.cell.wide { width: 47px; }
.pager { width: 71px; display: flex; align-items: center; gap: 9px; padding-left: 8px; }
.views { width: 68px; display: flex; align-items: center; gap: 10px; padding-left: 8px; }

.taskbar { flex: none; height: 40px; display: flex; color: #fff; background: linear-gradient(90deg, #32182a 0, #35303a 28%, #2b2427 36%, #232225 62%, #232225 76%, #2d2f3c 84%, #231f25 91%, #351828 98%); font-family: "Open Sans", sans-serif; }
.start { width: 48px; display: flex; align-items: center; justify-content: center; }
.search { width: 288px; display: flex; align-items: center; gap: 10px; padding-left: 11px; background: #f2f2f2; border: 1px solid #bbb; }
.search input { flex: 1; min-width: 0; border: 0; padding: 0; background: none; outline: 0; font: 14px "Open Sans", sans-serif; }
.search input::placeholder { color: #333; opacity: 1; }
.apps { display: flex; padding-left: 1px; }
.app { width: 49px; display: flex; align-items: center; justify-content: center; background-repeat: no-repeat; background-position: center bottom; }
.running { background-image: linear-gradient(#76b9ed, #76b9ed); background-size: 40px 2px; }
.active { background: #4b4b4e linear-gradient(#76b9ed, #76b9ed) no-repeat bottom / 100% 2px; }
.tray { margin-left: auto; display: flex; align-items: center; padding-right: 11px; }
.tray button { height: 40px; min-width: 24px; display: flex; align-items: center; justify-content: center; font-size: 12px; }
.tray .weather { gap: 7px; margin-right: 19px; font-size: 13px; }
.tray .lang { width: 36px; font-size: 11px; }
.tray .clock { width: 74px; flex-direction: column; line-height: 18px; font-size: 11px; }
.tray .notes { width: 36px; margin-left: 4px; }
.badge { font: 700 12px "Open Sans", sans-serif; fill: #fff; }
```
